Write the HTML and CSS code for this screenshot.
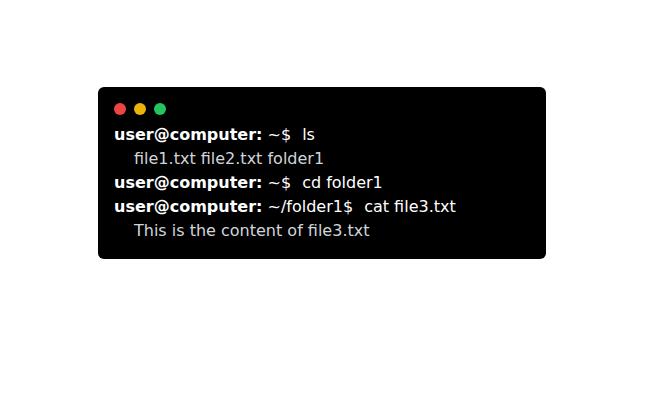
FILE: index.html
```html
<!DOCTYPE html>
<html>
<head>
<meta charset="utf-8">
<link rel="stylesheet" href="styles.css">
</head>
<body>
<div class="page">
  <div class="terminal">
    <div class="dots">
      <span class="dot red"></span>
      <span class="dot yellow"></span>
      <span class="dot green"></span>
    </div>
    <div class="line"><span class="user">user@computer:</span> <span class="path">~$</span><span class="cmd">ls</span></div>
    <div class="line out">file1.txt file2.txt folder1</div>
    <div class="line"><span class="user">user@computer:</span> <span class="path">~$</span><span class="cmd">cd folder1</span></div>
    <div class="line"><span class="user">user@computer:</span> <span class="path">~/folder1$</span><span class="cmd">cat file3.txt</span></div>
    <div class="line out">This is the content of file3.txt</div>
  </div>
</div>
</body>
</html>
```
FILE: styles.css
```css
html, body {
  margin: 0;
  padding: 0;
  background: #ffffff;
}
.page {
  padding: 87px 0 0 98px;
}
.terminal {
  width: 448px;
  box-sizing: border-box;
  background: #000000;
  border-radius: 6px;
  padding: 16px;
  font-family: "DejaVu Sans", sans-serif;
  font-size: 16px;
  line-height: 24px;
  color: #ffffff;
}
.dots {
  display: flex;
  gap: 8px;
  margin-bottom: 8px;
}
.dot {
  width: 12px;
  height: 12px;
  border-radius: 50%;
}
.red { background: #ef4444; }
.yellow { background: #eab308; }
.green { background: #22c55e; }
.line {
  white-space: pre;
}
.user {
  font-weight: bold;
}
.cmd {
  margin-left: 11px;
}
.out {
  padding-left: 20px;
  color: #d1d5db;
}
```
